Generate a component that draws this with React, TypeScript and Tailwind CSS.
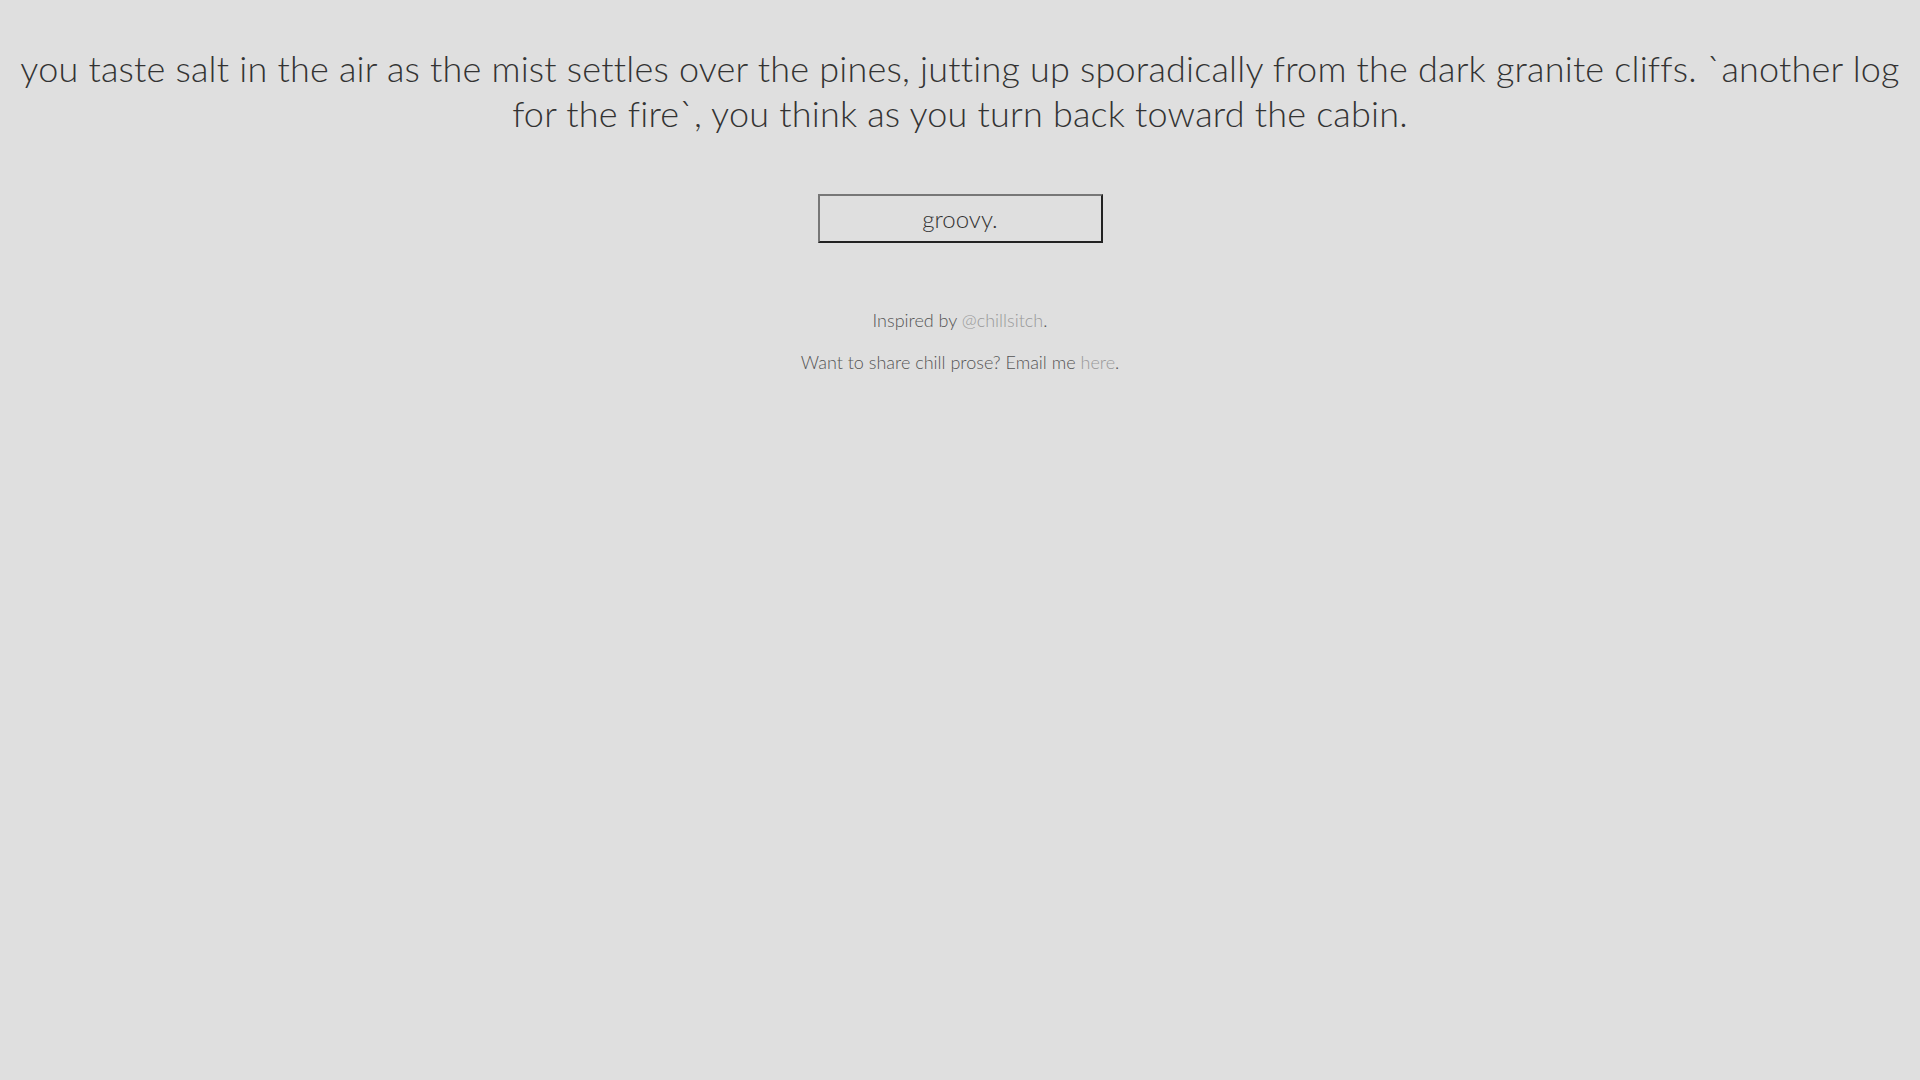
import React from "react";

const prose =
  "you taste salt in the air as the mist settles over the pines, jutting up sporadically from the dark granite cliffs. `another log for the fire`, you think as you turn back toward the cabin.";

export default function App() {
  return (
    <main className="min-h-screen w-full bg-[#dfdfdf] text-[#333] font-['Lato','Noto_Sans',sans-serif]">
      <div className="px-3 pt-[46px] text-center">
        <p className="text-[36px] leading-[45px] font-light tracking-[0.2px]">
          {prose}
        </p>
        <button className="mt-[58px] w-[285px] h-[49px] border-2 border-t-[#777] border-l-[#777] border-b-[#222] border-r-[#222] text-[24px] font-light text-[#333] bg-transparent">
          groovy.
        </button>
        <div className="mt-[64px] space-y-[15px] text-[18px] font-light text-[#555]">
          <p>
            Inspired by <a className="text-[#999]" href="#">@chillsitch</a>.
          </p>
          <p>
            Want to share chill prose? Email me{" "}
            <a className="text-[#999]" href="#">here</a>.
          </p>
        </div>
      </div>
    </main>
  );
}
